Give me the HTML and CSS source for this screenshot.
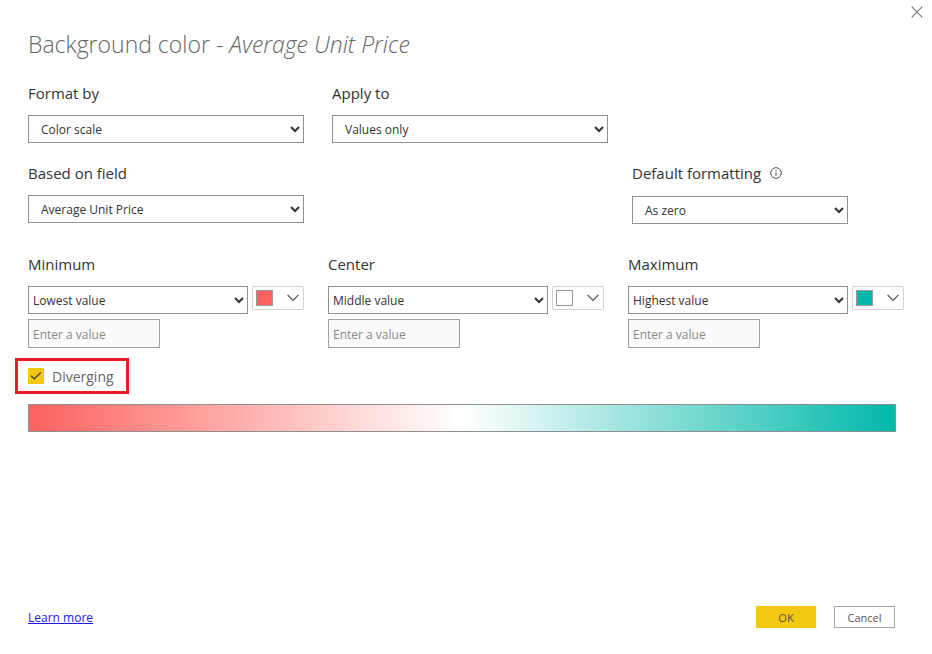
FILE: index.html
```html
<!DOCTYPE html>
<html lang="en">
<head>
<meta charset="utf-8">
<meta name="viewport" content="width=device-width, initial-scale=1">
<title>Background color - Average Unit Price</title>
<link rel="stylesheet" href="styles.css">
</head>
<body>
<form class="dialog">
  <button class="close" type="button" aria-label="Close">
    <svg width="12" height="12" viewBox="0 0 12 12"><path d="M0.7 0.7 11.3 11.3M11.3 0.7 0.7 11.3"/></svg>
  </button>
  <h1 class="title">Background color - <em>Average Unit Price</em></h1>

  <div class="row row-format">
    <div class="field">
      <label class="label" for="format-by">Format by</label>
      <select class="select select-inset" id="format-by"><option>Color scale</option></select>
    </div>
    <div class="field">
      <label class="label" for="apply-to">Apply to</label>
      <select class="select select-inset" id="apply-to"><option>Values only</option></select>
    </div>
  </div>

  <div class="row row-source">
    <div class="field">
      <label class="label" for="based-on">Based on field</label>
      <select class="select select-inset" id="based-on"><option>Average Unit Price</option></select>
    </div>
    <div class="field field-default">
      <div class="label-line">
        <label class="label" for="default-formatting">Default formatting</label>
        <svg class="info" width="12" height="12" viewBox="0 0 12 12"><circle cx="6" cy="6" r="5.3"/><path d="M6 5.2V9M6 3v1.2"/></svg>
      </div>
      <select class="select select-inset" id="default-formatting"><option>As zero</option></select>
    </div>
  </div>

  <div class="row row-stops">
    <div class="field">
      <label class="label" for="minimum">Minimum</label>
      <div class="stop">
        <select class="select" id="minimum"><option>Lowest value</option></select>
        <button class="picker" type="button" aria-label="Minimum color">
          <span class="swatch swatch-min"></span>
          <svg width="12" height="8" viewBox="0 0 12 8"><path d="M0.6 0.9 6 6.4 11.4 0.9"/></svg>
        </button>
      </div>
      <input class="value" type="text" placeholder="Enter a value" aria-label="Minimum value" disabled>
    </div>
    <div class="field">
      <label class="label" for="center">Center</label>
      <div class="stop">
        <select class="select" id="center"><option>Middle value</option></select>
        <button class="picker" type="button" aria-label="Center color">
          <span class="swatch swatch-mid"></span>
          <svg width="12" height="8" viewBox="0 0 12 8"><path d="M0.6 0.9 6 6.4 11.4 0.9"/></svg>
        </button>
      </div>
      <input class="value" type="text" placeholder="Enter a value" aria-label="Center value" disabled>
    </div>
    <div class="field">
      <label class="label" for="maximum">Maximum</label>
      <div class="stop">
        <select class="select" id="maximum"><option>Highest value</option></select>
        <button class="picker" type="button" aria-label="Maximum color">
          <span class="swatch swatch-max"></span>
          <svg width="12" height="8" viewBox="0 0 12 8"><path d="M0.6 0.9 6 6.4 11.4 0.9"/></svg>
        </button>
      </div>
      <input class="value" type="text" placeholder="Enter a value" aria-label="Maximum value" disabled>
    </div>
  </div>

  <label class="diverging" for="diverging">
    <span class="tick">
      <input type="checkbox" id="diverging" checked>
      <svg width="16" height="16" viewBox="0 0 16 16"><path d="M3 7.8 6.2 10.8 12.8 4.4"/></svg>
    </span>
    Diverging
  </label>

  <div class="scale"></div>

  <footer class="footer">
    <a class="link" href="#">Learn more</a>
    <button class="btn btn-primary" type="submit">OK</button>
    <button class="btn" type="button">Cancel</button>
  </footer>
</form>
</body>
</html>
```

FILE: styles.css
```css
* {
  box-sizing: border-box;
}

body {
  margin: 0;
  background: #fff;
  color: #333;
  font-family: "Open Sans", "Noto Sans", sans-serif;
  font-size: 12px;
}

button,
input,
select {
  margin: 0;
  font: inherit;
}

svg {
  display: block;
  fill: none;
}

.dialog {
  position: relative;
  display: flex;
  flex-direction: column;
  min-height: 100vh;
  padding: 28px 20px 26px 28px;
}

.close {
  position: absolute;
  top: 6px;
  right: 9px;
  padding: 0;
  border: 0;
  background: none;
}

.close svg {
  stroke: #777;
  stroke-width: 1.2;
}

.title {
  margin: 0 0 21px;
  color: #666;
  font-size: 23px;
  font-weight: 300;
  line-height: 32px;
}

.row {
  display: grid;
  grid-template-columns: repeat(3, 1fr);
  column-gap: 24px;
  padding-right: 8px;
}

.row-format {
  column-gap: 28px;
  margin-bottom: 18px;
  padding-right: 0;
}

.row-source {
  margin-bottom: 28px;
}

.field {
  display: flex;
  flex-direction: column;
}

.field-default {
  grid-column: 3;
  padding: 0 56px 0 4px;
}

.label {
  margin-bottom: 10px;
  font-size: 15px;
  line-height: 24px;
}

.label-line {
  display: flex;
  gap: 9px;
  padding-bottom: 1px;
}

.info {
  margin-top: 6px;
  stroke: #555;
}

.select {
  width: 100%;
  height: 28px;
  padding-right: 1px;
  border: 1px solid #919191;
  border-radius: 0;
  background: #fff;
  color: #333;
}

.select-inset {
  padding-left: 8px;
}

.stop {
  display: flex;
  align-items: flex-start;
  gap: 4px;
  margin-bottom: 5px;
}

.stop .select {
  flex: 1;
  min-width: 0;
}

.picker {
  display: flex;
  align-items: center;
  justify-content: space-between;
  width: 52px;
  height: 24px;
  padding: 0 4px 0 3px;
  border: 1px solid #d2d2d2;
  border-radius: 2px;
  background: #fff;
}

.picker svg {
  stroke: #555;
  stroke-width: 1.3;
}

.swatch {
  width: 17px;
  height: 16px;
  border: 1px solid #999;
}

.swatch-min {
  background: #fd625e;
}

.swatch-mid {
  background: #fff;
}

.swatch-max {
  background: #01b8aa;
}

.value {
  width: 132px;
  height: 29px;
  padding: 2px 4px 0;
  border: 1px solid #a0a0a0;
  background: #fafafa;
}

.value::placeholder {
  color: #888;
}

.diverging {
  display: flex;
  align-items: center;
  align-self: flex-start;
  gap: 8px;
  height: 36px;
  margin: 10px 0 10px -13px;
  padding: 0 12px 0 10px;
  border: 3px solid #ed1c24;
  color: #666;
  font-size: 14px;
}

.tick {
  position: relative;
}

.tick input {
  display: block;
  width: 16px;
  height: 16px;
  appearance: none;
  background: #f2c811;
}

.tick svg {
  position: absolute;
  inset: 0;
  stroke: #444;
  stroke-width: 1.4;
}

.scale {
  height: 28px;
  margin-right: 16px;
  border: 1px solid #8f8f8f;
  background: linear-gradient(to right, #fd625e, #fff, #01b8aa);
}

.footer {
  display: flex;
  align-items: center;
  gap: 18px;
  margin-top: auto;
  padding-right: 17px;
}

.link {
  margin-right: auto;
  color: #1a1ae6;
}

.btn {
  width: 61px;
  height: 22px;
  padding: 0;
  border: 1px solid #a6a6a6;
  background: #fff;
  color: #555;
  font-size: 11px;
}

.btn-primary {
  width: 60px;
  border-color: #f2c811;
  background: #f2c811;
}
```
